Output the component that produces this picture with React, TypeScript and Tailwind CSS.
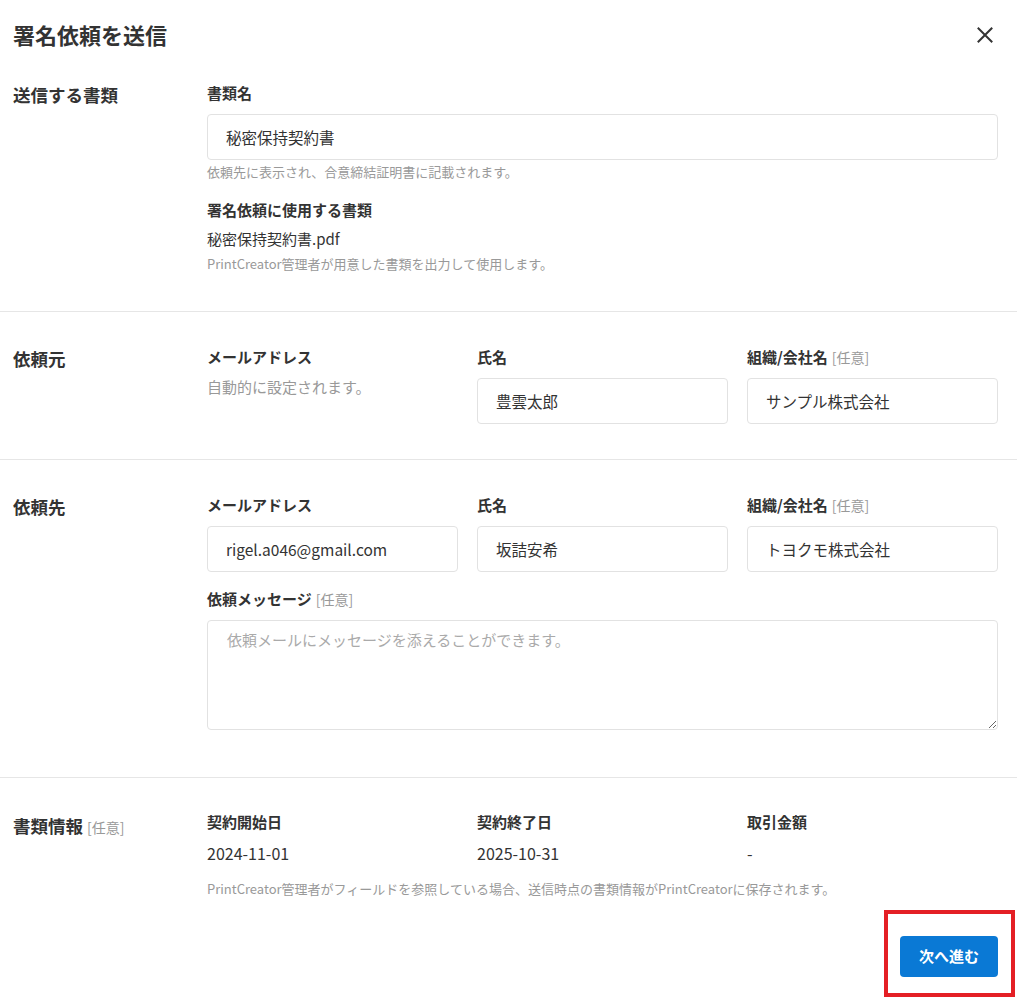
import React from 'react';

const font = { fontFamily: '"Noto Sans CJK JP", "Noto Sans", sans-serif' };

const Optional: React.FC = () => (
  <span className="ml-1 text-[14px] leading-none font-normal text-[#999]">[任意]</span>
);

const FieldLabel: React.FC<{ children: React.ReactNode; optional?: boolean }> = ({ children, optional }) => (
  <div className="h-5 text-[15px] leading-5 font-bold text-[#333]">
    {children}
    {optional && <Optional />}
  </div>
);

const TextInput: React.FC<{ value: string }> = ({ value }) => (
  <input
    readOnly
    value={value}
    style={font}
    className="mt-[11px] block h-[46px] w-full rounded border border-[#e2e2e2] bg-white px-[18px] text-[15.5px] text-[#333] outline-none"
  />
);

const SectionLabel: React.FC<{ children: React.ReactNode; optional?: boolean }> = ({ children, optional }) => (
  <div className="h-6 text-[17.5px] leading-6 font-bold text-[#333]">
    {children}
    {optional && <Optional />}
  </div>
);

const App: React.FC = () => {
  return (
    <div style={font} className="min-h-screen bg-white pl-[13px] pr-[19px] text-[#333]">
      <div className="flex items-center justify-between pt-[22px]">
        <h1 className="text-[22px] leading-6 font-bold text-[#333]">署名依頼を送信</h1>
        <button className="mr-[5px] mt-[2px] text-[#333]" aria-label="閉じる">
          <svg width="16" height="16" viewBox="0 0 16 16" fill="none" stroke="currentColor" strokeWidth="2" strokeLinecap="square">
            <path d="M1.5 1.5 L14.5 14.5 M14.5 1.5 L1.5 14.5" />
          </svg>
        </button>
      </div>

      {/* 送信する書類 */}
      <section className="grid grid-cols-[194px_1fr] pt-[37px] pb-[39px]">
        <SectionLabel>送信する書類</SectionLabel>
        <div>
          <FieldLabel>書類名</FieldLabel>
          <TextInput value="秘密保持契約書" />
          <p className="mt-1 text-[13px] leading-4 text-[#999]">依頼先に表示され、合意締結証明書に記載されます。</p>
          <div className="mt-5">
            <FieldLabel>署名依頼に使用する書類</FieldLabel>
          </div>
          <p className="mt-2 text-[15px] leading-[22px] text-[#333]">秘密保持契約書.pdf</p>
          <p className="mt-[6px] text-[13px] leading-4 text-[#999]">PrintCreator管理者が用意した書類を出力して使用します。</p>
        </div>
      </section>

      <div className="-mr-[19px] -ml-[13px] border-t border-[#e6e6e6]" />

      {/* 依頼元 */}
      <section className="grid grid-cols-[194px_1fr] pt-[35px] pb-[35px]">
        <SectionLabel>依頼元</SectionLabel>
        <div className="grid grid-cols-3 gap-x-[19px]">
          <div>
            <FieldLabel>メールアドレス</FieldLabel>
            <p className="mt-[10px] text-[15px] leading-5 text-[#999]">自動的に設定されます。</p>
          </div>
          <div>
            <FieldLabel>氏名</FieldLabel>
            <TextInput value="豊雲太郎" />
          </div>
          <div>
            <FieldLabel optional>組織/会社名</FieldLabel>
            <TextInput value="サンプル株式会社" />
          </div>
        </div>
      </section>

      <div className="-mr-[19px] -ml-[13px] border-t border-[#e6e6e6]" />

      {/* 依頼先 */}
      <section className="grid grid-cols-[194px_1fr] pt-[35px] pb-[47px]">
        <SectionLabel>依頼先</SectionLabel>
        <div>
          <div className="grid grid-cols-3 gap-x-[19px]">
            <div>
              <FieldLabel>メールアドレス</FieldLabel>
              <TextInput value="rigel.a046@gmail.com" />
            </div>
            <div>
              <FieldLabel>氏名</FieldLabel>
              <TextInput value="坂詰安希" />
            </div>
            <div>
              <FieldLabel optional>組織/会社名</FieldLabel>
              <TextInput value="トヨクモ株式会社" />
            </div>
          </div>
          <div className="mt-[17px]">
            <FieldLabel optional>依頼メッセージ</FieldLabel>
            <textarea
              style={font}
              placeholder="依頼メールにメッセージを添えることができます。"
              className="mt-[11px] block h-[110px] w-full rounded border border-[#e2e2e2] px-[19px] py-[7px] text-[15px] leading-6 text-[#333] outline-none placeholder:text-[#aaa]"
            />
          </div>
        </div>
      </section>

      <div className="-mr-[19px] -ml-[13px] border-t border-[#e6e6e6]" />

      {/* 書類情報 */}
      <section className="grid grid-cols-[194px_1fr] pt-[34px]">
        <div className="pt-[2px]">
          <SectionLabel optional>書類情報</SectionLabel>
        </div>
        <div>
          <div className="grid grid-cols-3 gap-x-[19px]">
            <div>
              <FieldLabel>契約開始日</FieldLabel>
              <p className="mt-[10px] text-[16px] leading-[22px]">2024-11-01</p>
            </div>
            <div>
              <FieldLabel>契約終了日</FieldLabel>
              <p className="mt-[10px] text-[16px] leading-[22px]">2025-10-31</p>
            </div>
            <div>
              <FieldLabel>取引金額</FieldLabel>
              <p className="mt-[10px] text-[16px] leading-[22px]">-</p>
            </div>
          </div>
          <p className="mt-[17px] text-[13px] leading-4 text-[#999]">
            PrintCreator管理者がフィールドを参照している場合、送信時点の書類情報がPrintCreatorに保存されます。
          </p>
        </div>
      </section>

      <div className="flex justify-end pt-[39px] pb-[21px]">
        <div className="relative">
          <button className="h-[41px] w-[98px] rounded bg-[#0a79d5] text-[15px] font-bold text-white">次へ進む</button>
          <span className="pointer-events-none absolute -top-[26px] -right-[17px] -bottom-[20px] -left-[16px] border-4 border-[#e41f25]" />
        </div>
      </div>
    </div>
  );
};

export default App;
